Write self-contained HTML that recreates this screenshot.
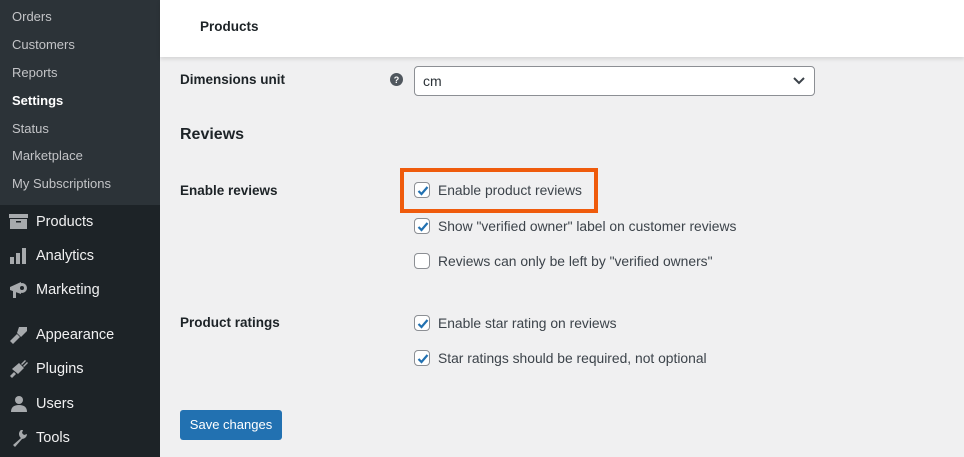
<!DOCTYPE html>
<html><head><meta charset="utf-8"><style>
*{margin:0;padding:0;box-sizing:border-box}
body{width:964px;height:457px;overflow:hidden;background:#f0f0f1;font-family:"Liberation Sans",sans-serif;position:relative}
.sb{position:absolute;left:0;top:0;width:160px;height:457px;background:#1d2327}
.sub{position:absolute;left:0;top:0;width:160px;height:205px;background:#2c3338}
.sub div{position:absolute;left:12px;font-size:13px;color:#c3c4c7}
.sub .act{color:#fff;font-weight:bold}
.m{position:absolute;left:36px;font-size:14.5px;color:#f0f0f1}
.ic{position:absolute;left:9px;width:20px;height:20px}
.hd{position:absolute;left:160px;top:0;width:804px;height:57px;background:#fff;box-shadow:0 2px 4px rgba(0,0,0,.12)}
.hd span{position:absolute;left:40px;top:19px;font-size:13.5px;font-weight:bold;color:#1d2327}
.lb{position:absolute;left:180px;font-size:13.5px;font-weight:bold;color:#1d2327}
.cb{position:absolute;left:414px;width:16px;height:16px;border:1px solid #8c8f94;border-radius:4px;background:#fff}
.cb svg{position:absolute;left:1px;top:1px}
.t{position:absolute;left:438px;font-size:13.85px;color:#3c434a}
</style></head><body>
<div class="sb">
<div class="sub">
<div style="top:9px">Orders</div>
<div style="top:37px">Customers</div>
<div style="top:65px">Reports</div>
<div class="act" style="top:93px">Settings</div>
<div style="top:121px">Status</div>
<div style="top:148px">Marketplace</div>
<div style="top:176px">My Subscriptions</div>
</div>
<svg class="ic" style="top:212px" viewBox="0 0 20 20" fill="#a7aaad"><rect x="0" y="2" width="19" height="4"/><rect x="1" y="7" width="17" height="10"/><rect x="7" y="9" width="5" height="1.5" fill="#1d2327"/></svg>
<div class="m" style="top:214px">Products</div>
<svg class="ic" style="top:246px" viewBox="0 0 20 20" fill="#a7aaad"><rect x="1" y="11" width="4" height="7"/><rect x="7" y="7" width="4" height="11"/><rect x="13" y="2" width="4" height="16"/></svg>
<div class="m" style="top:248px">Analytics</div>
<svg class="ic" style="top:280px" viewBox="0 0 20 20" fill="#a7aaad"><path d="M1 7 L12 2 L12 14 L1 10Z"/><circle cx="13" cy="8" r="5"/><circle cx="13" cy="8" r="2" fill="#1d2327"/><rect x="4" y="10" width="3" height="8"/></svg>
<div class="m" style="top:282px">Marketing</div>
<svg class="ic" style="top:325px" viewBox="0 0 20 20" fill="#a7aaad"><path d="M10 2 L18 2 L18 6 L12 12 L8 8Z"/><path d="M8 9 L11 12 L4 19 L1 16Z"/></svg>
<div class="m" style="top:327px">Appearance</div>
<svg class="ic" style="top:359px" viewBox="0 0 20 20" fill="#a7aaad"><path d="M3 10 L10 4 L15 9 L9 15Z"/><path d="M12 5 L16 1 L17 2 L13 6Z M14 7 L18 3 L19 4 L15 8Z"/><path d="M5 13 L7 15 L3 19 L1 17Z"/></svg>
<div class="m" style="top:361px">Plugins</div>
<svg class="ic" style="top:394px" viewBox="0 0 20 20" fill="#a7aaad"><circle cx="10" cy="6" r="4"/><path d="M2 18 Q2 11 10 11 Q18 11 18 18Z"/></svg>
<div class="m" style="top:396px">Users</div>
<svg class="ic" style="top:428px" viewBox="0 0 20 20" fill="#a7aaad"><path d="M12 2 A5 5 0 0 0 12 10 L4 17 L6 19 L13 11 A5 5 0 0 0 18 6 L15 7 L13 5 L14 2Z"/></svg>
<div class="m" style="top:430px">Tools</div>
</div>

<div class="hd"><span>Products</span></div>

<div class="lb" style="top:72px">Dimensions unit</div>
<svg style="position:absolute;left:390px;top:73px" width="13" height="13" viewBox="0 0 13 13"><circle cx="6.5" cy="6.5" r="6.5" fill="#50575e"/><text x="6.5" y="10" font-size="9" font-weight="bold" fill="#fff" text-anchor="middle" font-family="Liberation Sans">?</text></svg>
<div style="position:absolute;left:414px;top:66px;width:401px;height:30px;background:#fff;border:1px solid #8c8f94;border-radius:4px">
<span style="position:absolute;left:8px;top:6px;font-size:14px;color:#2c3338">cm</span>
<svg style="position:absolute;right:9px;top:9px" width="12" height="10" viewBox="0 0 12 10"><path d="M1 2 L6 7 L11 2" stroke="#3c434a" stroke-width="2" fill="none"/></svg>
</div>

<div style="position:absolute;left:180px;top:126px;font-size:16px;font-weight:bold;color:#1d2327">Reviews</div>
<div class="lb" style="top:183px">Enable reviews</div>

<div style="position:absolute;left:400px;top:168px;width:198px;height:45px;border:4px solid #ef5b0c"></div>

<div class="cb" style="top:182px"><svg width="14" height="14" viewBox="0 0 14 14"><path d="M2.5 7 L5.5 10 L11.5 3" stroke="#2271b1" stroke-width="2.2" fill="none"/></svg></div>
<div class="t" style="top:182px">Enable product reviews</div>
<div class="cb" style="top:218px"><svg width="14" height="14" viewBox="0 0 14 14"><path d="M2.5 7 L5.5 10 L11.5 3" stroke="#2271b1" stroke-width="2.2" fill="none"/></svg></div>
<div class="t" style="top:218px">Show "verified owner" label on customer reviews</div>
<div class="cb" style="top:253px"></div>
<div class="t" style="top:253px">Reviews can only be left by "verified owners"</div>

<div class="lb" style="top:315px">Product ratings</div>
<div class="cb" style="top:315px"><svg width="14" height="14" viewBox="0 0 14 14"><path d="M2.5 7 L5.5 10 L11.5 3" stroke="#2271b1" stroke-width="2.2" fill="none"/></svg></div>
<div class="t" style="top:315px">Enable star rating on reviews</div>
<div class="cb" style="top:350px"><svg width="14" height="14" viewBox="0 0 14 14"><path d="M2.5 7 L5.5 10 L11.5 3" stroke="#2271b1" stroke-width="2.2" fill="none"/></svg></div>
<div class="t" style="top:350px">Star ratings should be required, not optional</div>

<div style="position:absolute;left:180px;top:410px;width:102px;height:30px;background:#2271b1;border-radius:3px;color:#fff;font-size:13px;line-height:30px;text-align:center">Save changes</div>
</body></html>
